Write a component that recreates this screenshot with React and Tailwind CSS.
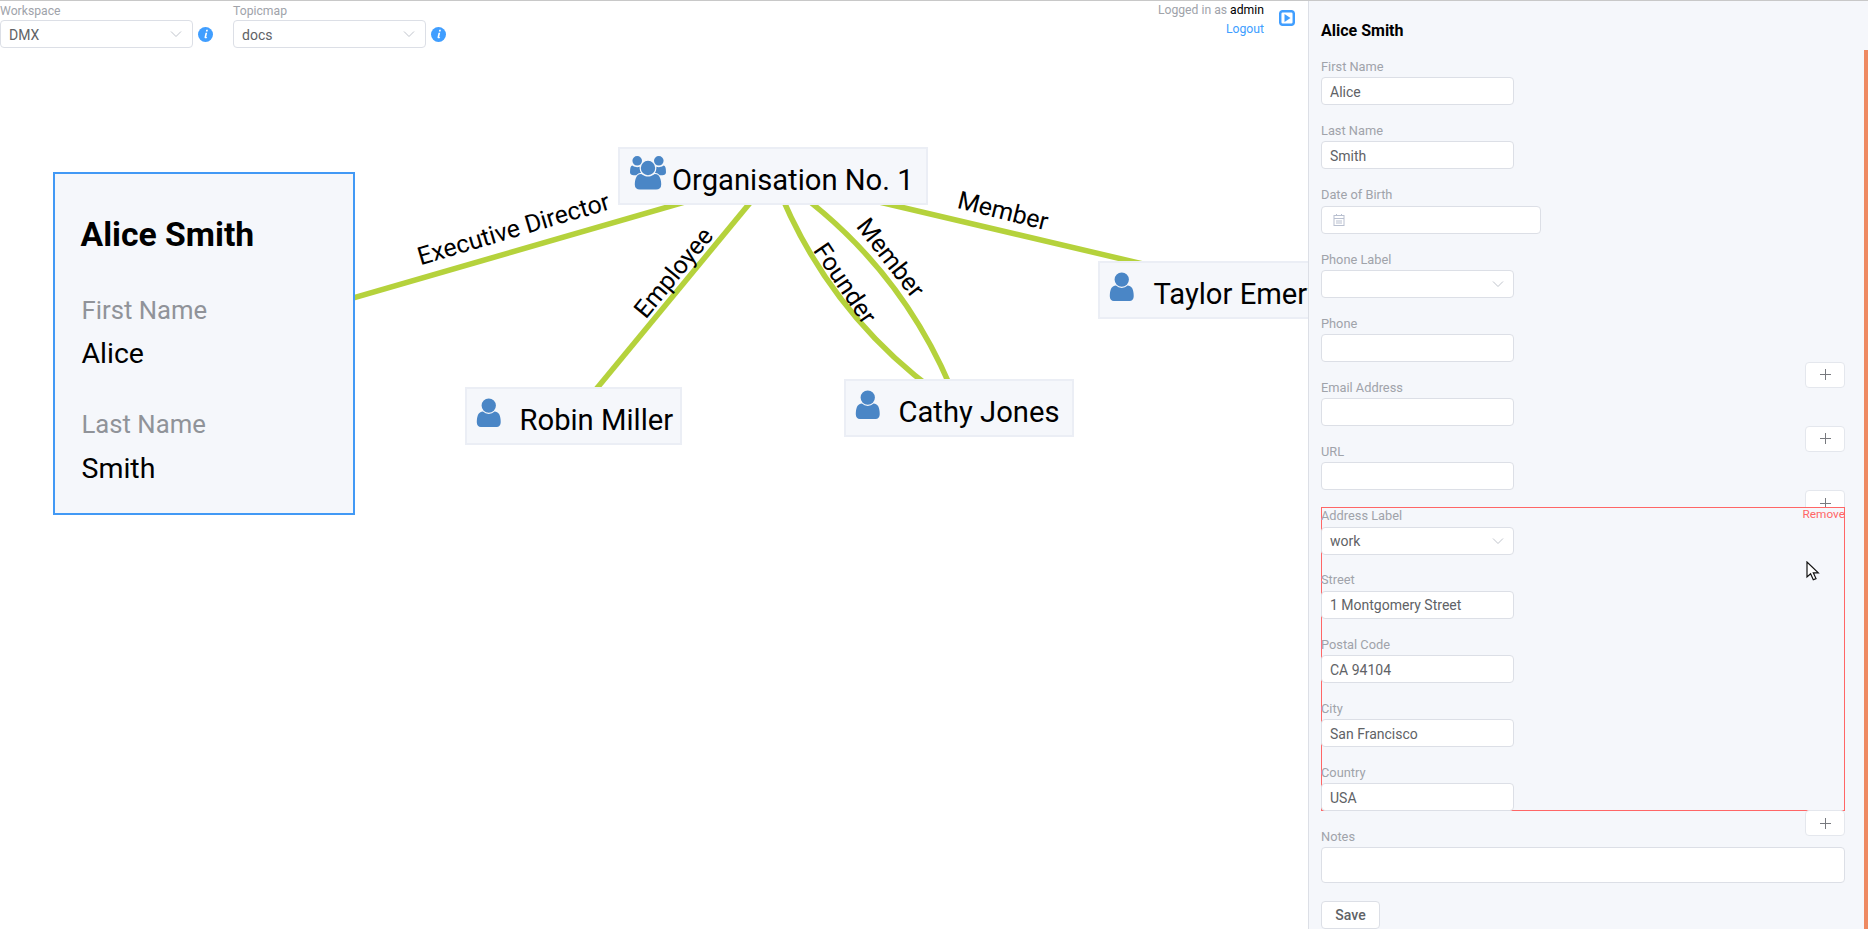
import { useState } from 'react';

const USER_PATH = 'M1536 1399q0 109-62.5 187t-150.5 78h-854q-88 0-150.5-78t-62.5-187q0-85 8.5-160.5t31.5-152 58.5-131 94-89 134.5-34.5q131 128 313 128t313-128q76 0 134.5 34.5t94 89 58.5 131 31.5 152 8.5 160.5zm-256-887q0 159-112.5 271.5t-271.5 112.5-271.5-112.5-112.5-271.5 112.5-271.5 271.5-112.5 271.5 112.5 112.5 271.5z';
const USERS_PATH = 'M593 896q-162 5-265 128h-134q-82 0-138-40.5t-56-118.5q0-353 124-353 6 0 43.5 21t97.5 42.5 119 21.5q67 0 133-23-5 37-5 66 0 139 81 256zm1071 637q0 120-73 189.5t-194 69.5h-874q-121 0-194-69.5t-73-189.5q0-53 3.5-103.5t14-109 26.5-108.5 43-97.5 62-81 85.5-53.5 111.5-20q10 0 43 21.5t73 48 107 48 135 21.5 135-21.5 107-48 73-48 43-21.5q61 0 111.5 20t85.5 53.5 62 81 43 97.5 26.5 108.5 14 109 3.5 103.5zm-1024-1277q0 106-75 181t-181 75-181-75-75-181 75-181 181-75 181 75 75 181zm704 384q0 159-112.5 271.5t-271.5 112.5-271.5-112.5-112.5-271.5 112.5-271.5 271.5-112.5 271.5 112.5 112.5 271.5zm576 225q0 78-56 118.5t-138 40.5h-134q-103-123-265-128 81-117 81-256 0-29-5-66 66 23 133 23 59 0 119-21.5t97.5-42.5 43.5-21q124 0 124 353zm-128-609q0 106-75 181t-181 75-181-75-75-181 75-181 181-75 181 75 75 181z';

const edgeLabels = [
  { text: 'Executive Director', x: 516, y: 237, r: -16.5 },
  { text: 'Employee', x: 680, y: 278, r: -50.5 },
  { text: 'Founder', x: 838, y: 288, r: 56 },
  { text: 'Member', x: 884, y: 263, r: 52 },
  { text: 'Member', x: 1001, y: 219, r: 14 },
];

function Chevron() {
  return (
    <svg width="12" height="8" viewBox="0 0 12 8" fill="none" stroke="#c0c4cc" strokeWidth="1">
      <path d="M1 1.5l5 5 5-5" />
    </svg>
  );
}

function InfoIcon() {
  return (
    <svg className="mt-px" width="15" height="15" viewBox="0 0 15 15">
      <circle cx="7.5" cy="7.5" r="7.5" fill="#409eff" />
      <path d="M8.2 2.8h1.7l-.3 1.6H7.9zM7.5 5.8h1.7l-1 4.2c-.1.4.3.4.9.1l-.1.8c-1 .6-2.6.8-2.5-.6z" fill="#fff" />
    </svg>
  );
}

function TopSelect({ label, value }) {
  return (
    <div>
      <div className="text-[12.2px] leading-[17px] text-[#a0a3aa] mt-[1.5px]">{label}</div>
      <div className="flex items-center gap-[5px] mt-[0.5px]">
        <div className="w-[193px] h-[28px] bg-white border border-[#dcdfe6] rounded flex items-center justify-between pl-2 pr-[10px] text-sm text-[#606266]">
          <span className="pt-[2px]">{value}</span>
          <Chevron />
        </div>
        <InfoIcon />
      </div>
    </div>
  );
}

function MapNode({ icon, text, className, textClass = '' }) {
  return (
    <div className={`absolute h-[58px] bg-[#f5f7fb] border-2 border-[#ebeef5] flex items-start text-[29.2px] leading-[58px] text-black whitespace-nowrap ${className}`}>
      {icon === 'users'
        ? <svg className="mt-[7px] ml-[10px] mr-[6px] shrink-0" width="36" height="33.6" viewBox="0 0 1920 1792" fill="#4a86c6"><path d={USERS_PATH} /></svg>
        : <svg className="mt-[6.5px] ml-[5px] mr-[14px] shrink-0" width="33.5" height="33.5" viewBox="0 0 1792 1792" fill="#4a86c6"><path d={USER_PATH} /></svg>}
      <span className={`mt-[1.5px] ${textClass}`}>{text}</span>
    </div>
  );
}

function Field({ label, value, wide, select, date, add, notes }) {
  return (
    <div className="relative h-[64.18px]">
      <div className="text-[12.8px] leading-[14px] mb-[3.3px] text-[#a0a3aa]">{label}</div>
      {notes
        ? <div className="w-full h-[36px] bg-white border border-[#dcdfe6] rounded-sm" />
        : (
          <div className={`${wide ? 'w-[220px]' : 'w-[193px]'} relative z-10 h-[28px] bg-white border border-[#dcdfe6] rounded flex items-center justify-between pl-2 pr-[9px] text-sm text-[#606266]`}>
            {date
              ? <svg className="ml-[3px]" width="12" height="12" viewBox="0 0 12 12" fill="none" stroke="#b9c0d0" strokeWidth="1"><rect x="1" y="1.5" width="10" height="10" /><path d="M1 4.5h10M3 7h6M3 9h6M3.5 0v2M8.5 0v2" /></svg>
              : <span className="pt-[1.5px]">{value}</span>}
            {select && <Chevron />}
          </div>
        )}
      {add && <AddButton className="absolute right-0 top-[45px]" />}
    </div>
  );
}

function AddButton({ className }) {
  return (
    <div className={`w-[40px] h-[26px] bg-white border border-[#e4e7ed] rounded flex items-center justify-center ${className}`}>
      <svg width="11" height="11" viewBox="0 0 11 11" stroke="#77797e" strokeWidth="1"><path d="M5.5 0v11M0 5.5h11" /></svg>
    </div>
  );
}

export default function App() {
  const [name] = useState('Alice Smith');

  return (
    <div className="h-[929px] w-[1868px] overflow-hidden bg-white font-['Roboto',sans-serif]">
      <div className="h-px bg-[#c8c8c8]" />
      <div className="flex h-[928px]">
        <main className="relative w-[1308px] overflow-hidden">
          <div className="absolute inset-0">
            <svg width="1308" height="928" className="absolute -top-px left-0" fill="none" stroke="#b5d23c" strokeWidth="5.5">
              <path d="M204 341L773 176.6" />
              <path d="M574 416L773 175" />
              <path d="M773 175Q828 321.5 959 408" />
              <path d="M773 175Q904 261.5 959 408" />
              <path d="M773 177L1243 287.5" />
              {edgeLabels.map((l, i) => (
                <text key={i} x={l.x} y={l.y} transform={`rotate(${l.r} ${l.x} ${l.y})`} textAnchor="middle" fill="#000" stroke="none" strokeWidth="0" fontSize="24.9">{l.text}</text>
              ))}
            </svg>
          </div>

          <MapNode icon="users" text="Organisation No. 1" className="left-[618px] top-[146px] w-[310px]" />
          <MapNode icon="user" text="Robin Miller" className="left-[465px] top-[386px] w-[217px]" />
          <MapNode icon="user" text="Cathy Jones" className="left-[844px] top-[378px] w-[230px]" />
          <MapNode icon="user" text="Taylor Emery" textClass="ml-px" className="left-[1098px] top-[260px] w-[290px]" />

          <div className="absolute left-[53px] top-[171px] w-[302px] h-[343px] bg-[#f5f7fb] border-2 border-[#4299f5] pl-[25.5px] text-black">
            <div className="mt-[39px] text-[33.7px] leading-[44px] font-bold">{name}</div>
            <div className="ml-px mt-[35px] text-[25.7px] leading-[36px] text-[#909399]">First Name</div>
            <div className="ml-px mt-[8px] text-[28.5px] leading-[36px]">Alice</div>
            <div className="ml-px mt-[34px] text-[25.7px] leading-[36px] text-[#909399]">Last Name</div>
            <div className="ml-px mt-[9px] text-[28.5px] leading-[36px]">Smith</div>
          </div>

          <div className="relative flex justify-between">
            <div className="flex gap-[20px]">
              <TopSelect label="Workspace" value="DMX" />
              <TopSelect label="Topicmap" value="docs" />
            </div>
            <div className="flex gap-[15px] pr-[13px]">
              <div className="text-right text-[12.2px]">
                <div className="leading-[19px] text-[#a0a3aa]">Logged in as <span className="text-black">admin</span></div>
                <div className="leading-[18px] text-[#409eff]">Logout</div>
              </div>
              <svg className="mt-[9px]" width="16" height="16" viewBox="0 0 16 16">
                <rect x="1.2" y="1.2" width="13.6" height="13.6" rx="2.5" fill="none" stroke="#409eff" strokeWidth="2.5" />
                <path d="M5.5 4l6 4-6 4z" fill="#409eff" />
              </svg>
            </div>
          </div>
        </main>

        <aside className="relative w-[560px] overflow-hidden bg-[#f5f7fb] border-l border-[#dcdfe6] pl-3 pr-[23px]">
          <div className="absolute right-0 top-[49px] bottom-0 w-[4px] bg-[#ee8a62]" />
          <h1 className="h-[59px] pt-[20px] text-base leading-[19px] font-bold text-black">{name}</h1>
          <Field label="First Name" value="Alice" />
          <Field label="Last Name" value="Smith" />
          <Field label="Date of Birth" wide date />
          <Field label="Phone Label" select />
          <Field label="Phone" add />
          <Field label="Email Address" add />
          <Field label="URL" add />
          <div className="relative">
            <div className="absolute -top-[2px] left-0 right-0 bottom-[19.5px] bg-[#f5f7fb] border border-[#ff6666]" />
            <div className="absolute right-0 -top-[3px] text-[11.8px] leading-[17px] text-[#ff6666]">Remove</div>
            <svg className="absolute left-[485px] top-[52px]" width="14" height="20" viewBox="0 0 14 20" fill="#fff" stroke="#111" strokeWidth="1.2"><path d="M1 1v15l3.6-3.2 2.7 6 2.7-1.2-2.7-5.8h5z" /></svg>
            <div className="relative">
              <Field label="Address Label" value="work" select />
              <Field label="Street" value="1 Montgomery Street" />
              <Field label="Postal Code" value="CA 94104" />
              <Field label="City" value="San Francisco" />
              <Field label="Country" value="USA" />
            </div>
            <AddButton className="absolute right-0 -bottom-[6px]" />
          </div>
          <Field label="Notes" notes />
          <div className="mt-[6.5px] w-[59px] h-[28px] bg-white border border-[#dcdfe6] rounded flex items-center justify-center text-sm font-medium text-[#606266]">Save</div>
        </aside>
      </div>
    </div>
  );
}
